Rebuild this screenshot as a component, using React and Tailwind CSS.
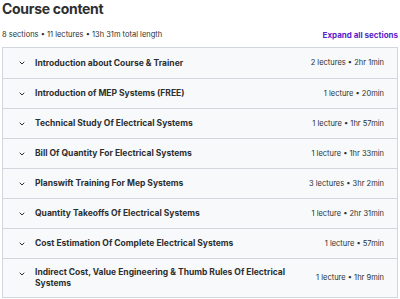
const sections = [
  { title: 'Introduction about Course & Trainer', meta: '2 lectures • 2hr 1min' },
  { title: 'Introduction of MEP Systems (FREE)', meta: '1 lecture • 20min' },
  { title: 'Technical Study Of Electrical Systems', meta: '1 lecture • 1hr 57min' },
  { title: 'Bill Of Quantity For Electrical Systems', meta: '1 lecture • 1hr 33min' },
  { title: 'Planswift Training For Mep Systems', meta: '3 lectures • 3hr 2min' },
  { title: 'Quantity Takeoffs Of Electrical Systems', meta: '1 lecture • 2hr 31min' },
  { title: 'Cost Estimation Of Complete Electrical Systems', meta: '1 lecture • 57min' },
  { title: 'Indirect Cost, Value Engineering & Thumb Rules Of Electrical Systems', meta: '1 lecture • 1hr 9min' },
];

const Chevron = () => (
  <svg width="8" height="8" viewBox="0 0 24 24" fill="none" stroke="#2d2f31" strokeWidth="3" strokeLinecap="round" strokeLinejoin="round">
    <path d="M6 9l6 6 6-6" />
  </svg>
);

export default function App() {
  return (
    <div className="w-[400px] h-[299px] overflow-hidden bg-white px-[2px] text-[#2d2f31]" style={{ fontFamily: 'Inter, "Noto Sans", sans-serif' }}>
      <h2 className="text-[14px] font-bold leading-[17px] tracking-[-0.3px]">Course content</h2>
      <div className="flex items-center justify-between mt-[12px] mb-[6px] leading-[12px]">
        <span className="text-[7.5px] text-[#2d2f31]">8 sections • 11 lectures • 13h 31m total length</span>
        <span className="text-[8px] font-bold text-[#5624d0]">Expand all sections</span>
      </div>
      <div className="border border-[#d1d7dc] bg-[#f7f9fa]">
        {sections.map((s, i) => (
          <div
            key={i}
            className={`flex items-center gap-[9px] pl-[15px] pr-[13px] ${i > 0 ? 'border-t border-[#d1d7dc]' : ''} ${i === sections.length - 1 ? 'h-[39px]' : 'h-[30px]'}`}
          >
            <div className="self-start mt-[11px] shrink-0">
              <Chevron />
            </div>
            <div className="flex-1 text-[8.5px] font-bold leading-[11px] pr-[8px]">{s.title}</div>
            <div className="text-[7.5px] text-[#2d2f31] shrink-0">{s.meta}</div>
          </div>
        ))}
      </div>
    </div>
  );
}
